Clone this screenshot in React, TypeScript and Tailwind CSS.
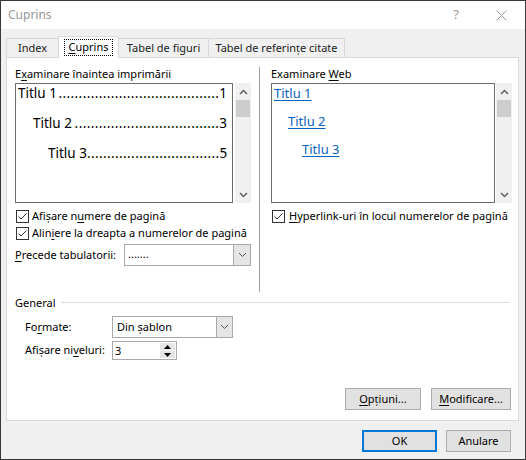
import React from "react";

const Chev = ({ dir }: { dir: "up" | "down" }) => (
  <svg width="9" height="6" viewBox="0 0 9 6">
    <polyline
      points={dir === "up" ? "1,5 4.5,1.5 8,5" : "1,1 4.5,4.5 8,1"}
      fill="none"
      stroke="#606060"
      strokeWidth="1.5"
    />
  </svg>
);

const DropChev = () => (
  <svg width="9" height="6" viewBox="0 0 9 6">
    <polyline points="1,1 4.5,4.5 8,1" fill="none" stroke="#555" strokeWidth="1" />
  </svg>
);

function Scrollbar() {
  return (
    <div className="w-[16px] h-full bg-[#f0f0f0] flex flex-col shrink-0">
      <div className="h-[17px] flex items-center justify-center">
        <Chev dir="up" />
      </div>
      <div className="h-[17px] mx-[1px] bg-[#cdcdcd]" />
      <div className="flex-1" />
      <div className="h-[17px] flex items-center justify-center">
        <Chev dir="down" />
      </div>
    </div>
  );
}

const Check = () => (
  <div className="w-[13px] h-[13px] border border-[#333] bg-white flex items-center justify-center shrink-0">
    <svg width="11" height="11" viewBox="0 0 11 11">
      <polyline points="1.5,5.5 4,8 9.5,2.5" fill="none" stroke="#333" strokeWidth="1" />
    </svg>
  </div>
);

const U = ({ children }: { children: React.ReactNode }) => (
  <span className="underline underline-offset-2 decoration-1">{children}</span>
);

function TocRow({
  indent,
  title,
  page,
  dots,
}: {
  indent: string;
  title: string;
  page: string;
  dots: number;
}) {
  return (
    <div className={`h-[30px] flex items-start leading-[19px] ${indent}`}>
      <span className="whitespace-nowrap">{title}</span>
      <span className="flex-1 whitespace-nowrap text-right tracking-[0.4px]">{".".repeat(dots)}</span>
      <span>{page}</span>
    </div>
  );
}

function Button({ children, className }: { children: React.ReactNode; className: string }) {
  return (
    <div
      className={`h-[22px] bg-[#e1e1e1] border border-[#adadad] flex items-center justify-center ${className}`}
    >
      {children}
    </div>
  );
}

export default function App() {
  return (
    <div className="w-[526px] h-[460px] border border-[#383838] bg-[#f0f0f0] flex flex-col font-['Noto_Sans',sans-serif] text-[11px] text-black overflow-hidden">
      {/* title bar */}
      <div className="h-[28px] bg-white flex items-center shrink-0">
        <span className="ml-[7px] text-[12px] text-[#999]">Cuprins</span>
        <span className="ml-auto text-[13px] text-[#999] mr-[37px]">?</span>
        <svg width="11" height="11" viewBox="0 0 11 11" className="mr-[18px]">
          <path d="M0.5 0.5 L10.5 10.5 M10.5 0.5 L0.5 10.5" stroke="#999" strokeWidth="1" />
        </svg>
      </div>

      {/* body */}
      <div className="flex-1 flex flex-col pt-[7px] pl-[5px]">
        {/* tabs */}
        <div className="h-[21px] flex items-end relative z-10">
          <div className="w-[52px] h-[19px] border-l border-t border-[#d9d9d9] flex items-center justify-center text-[#222]">
            Index
          </div>
          <div className="w-[61px] h-[22px] mb-[-1px] bg-white border-l border-t border-r border-[#d9d9d9] flex items-center justify-center">
            <div className="border border-dotted border-black px-[4px] h-[17px] flex items-center">
              <span>
                <U>C</U>uprins
              </span>
            </div>
          </div>
          <div className="w-[90px] h-[19px] border-t border-r border-[#d9d9d9] flex items-center justify-center text-[#222]">
            Tabel de figuri
          </div>
          <div className="w-[136px] h-[19px] border-t border-r border-[#d9d9d9] flex items-center justify-center text-[#222]">
            Tabel de referințe citate
          </div>
        </div>

        {/* panel */}
        <div className="w-[513px] h-[364px] bg-white border border-[#d9d9d9] flex flex-col">
          {/* top section */}
          <div className="h-[234px] flex items-start pl-[8px]">
            {/* left col */}
            <div className="w-[236px] pt-[8px] flex flex-col">
              <div className="h-[15px] leading-[15px] whitespace-nowrap">
                E<U>x</U>aminare înaintea imprimării
              </div>
              <div className="mt-[2px] h-[120px] flex">
                <div className="w-[218px] h-full border border-[#6d6d6d] text-[13.5px] pr-[5px]">
                  <TocRow indent="pl-[2px]" title="Titlu 1" page="1" dots={40} />
                  <TocRow indent="pl-[17px]" title="Titlu 2 " page="3" dots={36} />
                  <TocRow indent="pl-[32px]" title="Titlu 3" page="5" dots={33} />
                </div>
                <div className="ml-[2px] h-full">
                  <Scrollbar />
                </div>
              </div>
              <div className="mt-[5px] h-[17px] flex items-center pl-[1px]">
                <Check />
                <span className="ml-[3px] whitespace-nowrap">
                  Afișare n<U>u</U>mere de pagină
                </span>
              </div>
              <div className="h-[17px] flex items-center pl-[1px]">
                <Check />
                <span className="ml-[3px] whitespace-nowrap">
                  Alin<U>i</U>ere la dreapta a numerelor de pagină
                </span>
              </div>
              <div className="mt-[2px] h-[22px] flex items-center">
                <span className="whitespace-nowrap">
                  <U>P</U>recede tabulatorii:
                </span>
                <div className="ml-auto w-[127px] h-[22px] border border-[#a9a9a9] bg-white flex">
                  <span className="flex-1 pl-[3px] leading-[18px]">.......</span>
                  <div className="w-[17px] h-full bg-[#e5e5e5] border-l border-[#a9a9a9] flex items-center justify-center">
                    <DropChev />
                  </div>
                </div>
              </div>
            </div>

            {/* divider */}
            <div className="ml-[8px] mt-[9px] w-px h-[225px] bg-[#a0a0a0]" />

            {/* right col */}
            <div className="ml-[11px] w-[241px] pt-[8px] flex flex-col">
              <div className="h-[15px] leading-[15px] whitespace-nowrap">
                Examinare <U>W</U>eb
              </div>
              <div className="mt-[2px] h-[120px] flex">
                <div className="w-[224px] h-full border border-[#6d6d6d] text-[13px] text-[#0563c1]">
                  <div className="h-[28px] leading-[19px] pl-[2px]">
                    <span className="underline decoration-1 underline-offset-2">Titlu 1</span>
                  </div>
                  <div className="h-[28px] leading-[19px] pl-[16px]">
                    <span className="underline decoration-1 underline-offset-2">Titlu 2</span>
                  </div>
                  <div className="h-[28px] leading-[19px] pl-[30px]">
                    <span className="underline decoration-1 underline-offset-2">Titlu 3</span>
                  </div>
                </div>
                <div className="ml-[1px] h-full">
                  <Scrollbar />
                </div>
              </div>
              <div className="mt-[5px] h-[17px] flex items-center pl-[1px]">
                <Check />
                <span className="ml-[4px] whitespace-nowrap">
                  <U>H</U>yperlink-uri în locul numerelor de pagină
                </span>
              </div>
            </div>
          </div>

          {/* General */}
          <div className="px-[8px] flex flex-col">
            <div className="mt-[3px] h-[15px] flex items-center">
              <span className="leading-[15px]">General</span>
              <div className="ml-[5px] flex-1 h-px bg-[#dcdcdc]" />
            </div>
            <div className="mt-[6px] h-[22px] flex items-center pl-[10px]">
              <span className="w-[87px]">
                Fo<U>r</U>mate:
              </span>
              <div className="w-[121px] h-[22px] border border-[#a9a9a9] bg-white flex">
                <span className="flex-1 pl-[4px] leading-[20px]">Din șablon</span>
                <div className="w-[16px] h-full bg-[#e5e5e5] border-l border-[#a9a9a9] flex items-center justify-center">
                  <DropChev />
                </div>
              </div>
            </div>
            <div className="mt-[3px] h-[19px] flex items-center pl-[10px]">
              <span className="w-[87px] whitespace-nowrap">
                Afișare ni<U>v</U>eluri:
              </span>
              <div className="w-[65px] h-[19px] border border-[#a9a9a9] bg-white flex items-center">
                <span className="flex-1 pl-[2px] leading-[17px]">3</span>
                <div className="w-[15px] h-[15px] mr-[1px] flex flex-col gap-[1px]">
                  <div className="flex-1 bg-[#e5e5e5] flex items-center justify-center">
                    <svg width="7" height="4" viewBox="0 0 7 4">
                      <polygon points="0,4 3.5,0 7,4" fill="#000" />
                    </svg>
                  </div>
                  <div className="flex-1 bg-[#e5e5e5] flex items-center justify-center">
                    <svg width="7" height="4" viewBox="0 0 7 4">
                      <polygon points="0,0 3.5,4 7,0" fill="#000" />
                    </svg>
                  </div>
                </div>
              </div>
            </div>
          </div>

          <div className="mt-auto mb-[10px] flex justify-end pr-[7px] gap-[10px]">
            <Button className="w-[76px]">
              <span>
                <U>O</U>pțiuni...
              </span>
            </Button>
            <Button className="w-[80px]">
              <span>
                <U>M</U>odificare...
              </span>
            </Button>
          </div>
        </div>

        {/* bottom buttons */}
        <div className="mt-[9px] flex justify-end pr-[14px] gap-[9px]">
          <div className="w-[75px] h-[22px] bg-[#e1e1e1] border-2 border-[#0078d7] flex items-center justify-center">
            OK
          </div>
          <Button className="w-[65px]">Anulare</Button>
        </div>
      </div>
    </div>
  );
}
